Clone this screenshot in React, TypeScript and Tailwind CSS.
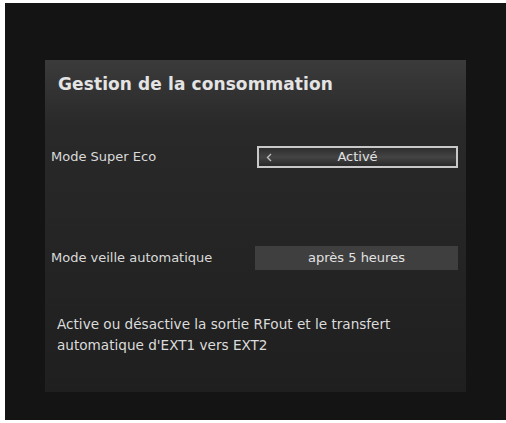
export default function App() {
  return (
    <div className="w-[506px] h-[423px] bg-white pl-[5px] pt-[3px] pb-[3px]" style={{ fontFamily: '"DejaVu Sans", sans-serif' }}>
      <div className="h-full bg-[#141414] pt-[57px] pl-[40px]">
        <div className="w-[421px] h-[332px] bg-gradient-to-b from-[#3b3b3b] via-[#292929] via-[20%] to-[#1f1f1f] flex flex-col">
          <div className="pl-[13px] pt-[12px] h-[86px]">
            <h1 className="text-[17px] font-bold text-[#e4e4e4] tracking-[0.1px]">Gestion de la consommation</h1>
          </div>

          <div className="flex items-center pl-[6px] pr-[8px]">
            <span className="text-[13px] text-[#dadada] w-[206px]">Mode Super Eco</span>
            <div className="relative flex-1 h-[22px] border-2 border-[#c8c8c8] bg-gradient-to-b from-[#2e2e2e] via-[#444444] to-[#2a2a2a] flex items-center justify-center">
              <svg className="absolute left-[7px] top-[5px]" width="6" height="9" viewBox="0 0 6 9">
                <path d="M5 1 L1.5 4.5 L5 8" stroke="#bdbdbd" strokeWidth="1.4" fill="none" />
              </svg>
              <span className="text-[13px] text-[#e2e2e2]">Activé</span>
            </div>
          </div>

          <div className="flex items-center pl-[6px] pr-[8px] mt-[78px]">
            <span className="text-[13px] text-[#dadada] w-[204px]">Mode veille automatique</span>
            <div className="flex-1 h-[24px] bg-[#3f3f3f] flex items-center justify-center">
              <span className="text-[13px] text-[#e2e2e2]">après 5 heures</span>
            </div>
          </div>

          <p className="mt-[44px] pl-[12px] text-[13.6px] leading-[21px] text-[#dcdcdc]">
            Active ou désactive la sortie RFout et le transfert
            <br />
            automatique d'EXT1 vers EXT2
          </p>
        </div>
      </div>
    </div>
  )
}
